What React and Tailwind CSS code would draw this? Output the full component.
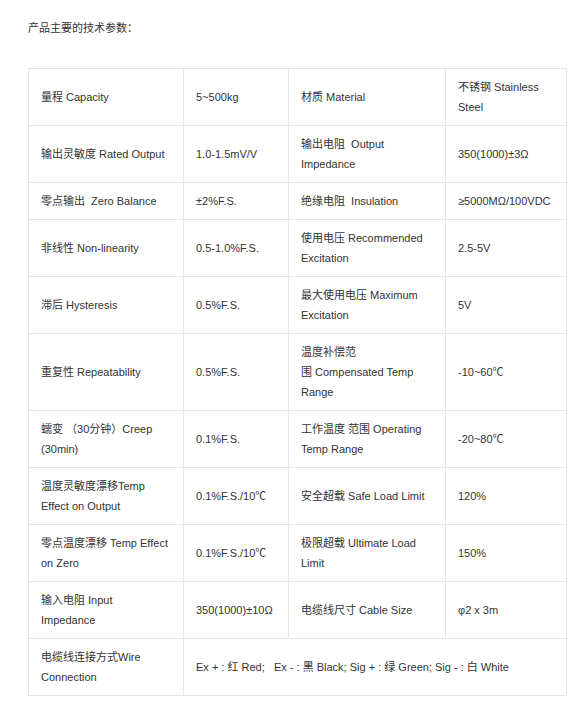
import React from "react";

const NB = "\u00a0";

const rows = [
  [["量程 Capacity"], ["5~500kg"], ["材质 Material"], ["不锈钢 Stainless", "Steel"]],
  [["输出灵敏度 Rated Output"], ["1.0-1.5mV/V"], ["输出电阻" + NB + " Output", "Impedance"], ["350(1000)±3Ω"]],
  [["零点输出" + NB + " Zero Balance"], ["±2%F.S."], ["绝缘电阻" + NB + " Insulation"], ["≥5000MΩ/100VDC"]],
  [["非线性 Non-linearity"], ["0.5-1.0%F.S."], ["使用电压 Recommended", "Excitation"], ["2.5-5V"]],
  [["滞后 Hysteresis"], ["0.5%F.S."], ["最大使用电压 Maximum", "Excitation"], ["5V"]],
  [["重复性 Repeatability"], ["0.5%F.S."], ["温度补偿范", "围 Compensated Temp", "Range"], ["-10~60℃"]],
  [["蠕变 （30分钟）Creep", "(30min)"], ["0.1%F.S."], ["工作温度 范围 Operating", "Temp Range"], ["-20~80℃"]],
  [["温度灵敏度漂移Temp", "Effect on Output"], ["0.1%F.S./10℃"], ["安全超载 Safe Load Limit"], ["120%"]],
  [["零点温度漂移 Temp Effect", "on Zero"], ["0.1%F.S./10℃"], ["极限超载 Ultimate Load", "Limit"], ["150%"]],
  [["输入电阻 Input", "Impedance"], ["350(1000)±10Ω"], ["电缆线尺寸 Cable Size"], ["φ2 x 3m"]],
];

function Lines({ lines }) {
  return lines.map((l, i) => (
    <div key={i} className="whitespace-nowrap">
      {l}
    </div>
  ));
}

const td = "border border-[#e6e6e6] px-3 py-2 align-middle";

export default function App() {
  return (
    <div
      className="bg-white min-h-[717px] w-[571px] text-[11px] leading-[20px] text-[#333]"
      style={{ fontFamily: '"Liberation Sans", Arial, "Noto Sans CJK SC", sans-serif' }}
    >
      <div className="pl-[28px] pt-[18px]">产品主要的技术参数：</div>
      <table className="ml-[28px] mt-[30px] w-[538px] table-fixed border-collapse">
        <colgroup>
          <col className="w-[155px]" />
          <col className="w-[105px]" />
          <col className="w-[157px]" />
          <col className="w-[121px]" />
        </colgroup>
        <tbody>
          {rows.map((r, i) => (
            <tr key={i}>
              {r.map((c, j) => (
                <td key={j} className={td}>
                  <Lines lines={c} />
                </td>
              ))}
            </tr>
          ))}
          <tr>
            <td className={td}>
              <Lines lines={["电缆线连接方式Wire", "Connection"]} />
            </td>
            <td className={td} colSpan={3}>
              <div className="whitespace-pre">
                {"Ex + : 红 Red;   Ex - : 黑 Black; Sig + : 绿 Green; Sig - : 白 White"}
              </div>
            </td>
          </tr>
        </tbody>
      </table>
    </div>
  );
}
